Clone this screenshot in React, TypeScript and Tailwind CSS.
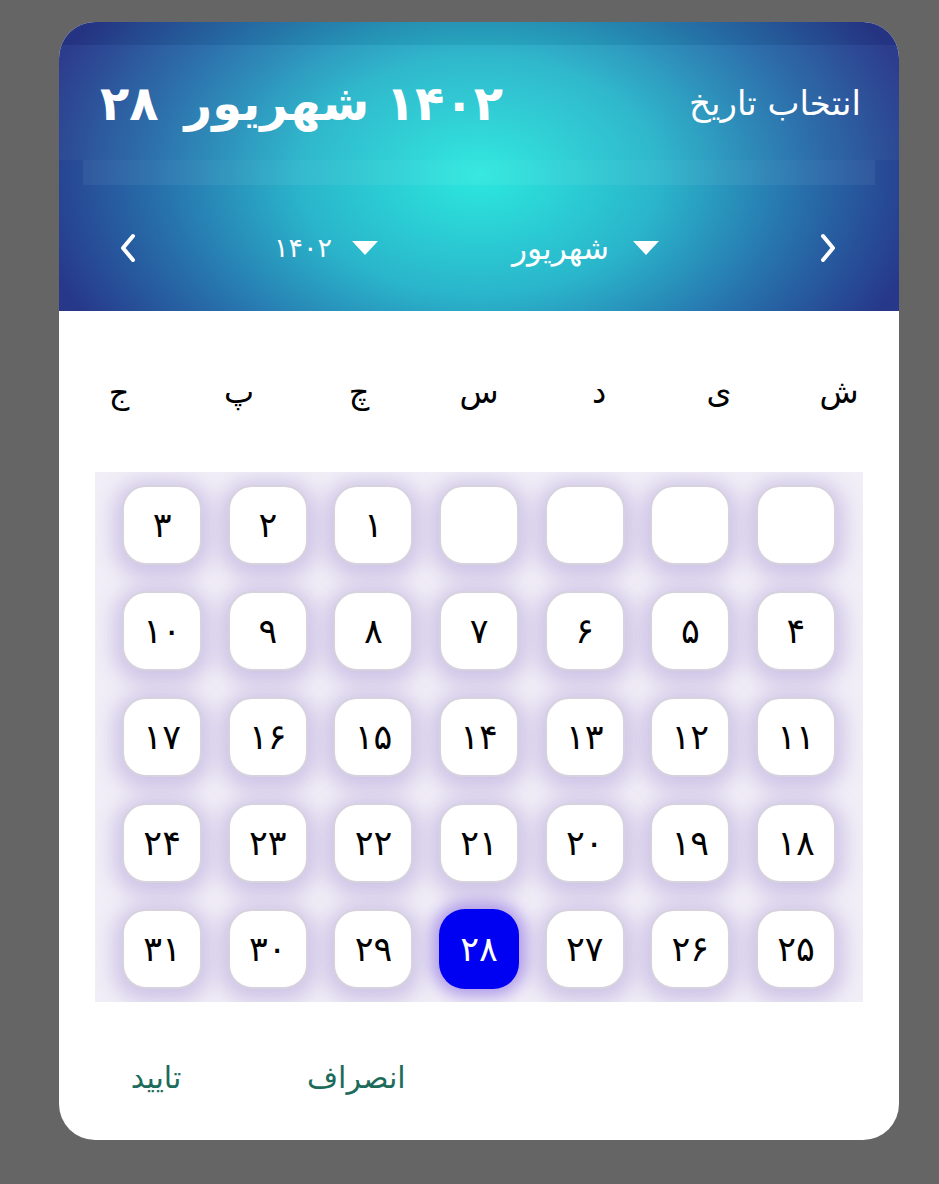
import React from "react";

const font = { fontFamily: '"DejaVu Sans", "Noto Sans", sans-serif' };

const weekdays = ["ش", "ی", "د", "س", "چ", "پ", "ج"];
const fa = (n: number) => String(n).replace(/\d/g, (d) => "۰۱۲۳۴۵۶۷۸۹"[Number(d)]);

function Chevron({ dir }: { dir: "left" | "right" }) {
  return (
    <svg width="18" height="32" viewBox="0 0 18 32" fill="none">
      <path
        d={dir === "left" ? "M14 4 L4 16 L14 28" : "M4 4 L14 16 L4 28"}
        stroke="white"
        strokeWidth="4"
        strokeLinecap="round"
        strokeLinejoin="round"
      />
    </svg>
  );
}

function Tri() {
  return (
    <svg width="26" height="14" viewBox="0 0 26 14">
      <path d="M0 0 L26 0 L13 14 Z" fill="white" />
    </svg>
  );
}

export default function App() {
  const cells: (number | null)[] = [null, null, null, null];
  for (let i = 1; i <= 31; i++) cells.push(i);

  return (
    <div className="min-h-[1184px] w-[939px] bg-[#666566] pt-[22px] pl-[59px]" style={font}>
      <div dir="rtl" className="w-[840px] h-[1118px] bg-white rounded-[36px] overflow-hidden flex flex-col">
        {/* Header */}
        <div className="h-[289px] bg-[radial-gradient(ellipse_450px_300px_at_50%_53%,#2ce8de_0%,#2ab5cb_40%,#2773ad_70%,#27378a_100%)] flex flex-col">
          <div className="h-[23px] bg-black/[0.05]" />
          <div className="h-[115px] flex items-center justify-between pr-[38px] pl-[41px] bg-white/[0.03]">
            <span className="text-white text-[34px] leading-none">انتخاب تاریخ</span>
            <span className="text-white text-[48px] font-bold leading-none flex gap-[26px]">
              <span>۱۴۰۲ شهریور</span>
              <span>۲۸</span>
            </span>
          </div>
          <div className="h-[25px] mx-[24px] bg-white/[0.05]" />
          <div dir="ltr" className="flex-1 flex items-center pl-[60px] pr-[62px]">
            <Chevron dir="left" />
            <div className="ml-[137px] flex items-center gap-[20px] text-white text-[27px]">
              <span>۱۴۰۲</span>
              <Tri />
            </div>
            <div className="ml-[134px] flex items-center gap-[24px] text-white text-[31px]">
              <span>شهریور</span>
              <Tri />
            </div>
            <div className="ml-auto">
              <Chevron dir="right" />
            </div>
          </div>
        </div>

        {/* Weekdays */}
        <div className="grid grid-cols-7 h-[161px] items-center text-black text-[32px] leading-none">
          {weekdays.map((w) => (
            <div key={w} className="text-center">
              {w}
            </div>
          ))}
        </div>

        {/* Grid */}
        <div className="mx-[36px] px-[27px] py-[13px] bg-[#f1eef7] overflow-hidden">
          <div className="grid grid-cols-7 gap-x-[25.5px] gap-y-[26px]">
            {cells.map((c, i) => {
              const sel = c === 28;
              return (
                <div
                  key={i}
                  className={
                    sel
                      ? "w-[80px] h-[80px] rounded-[26px] bg-[#0000f2] text-white flex items-center justify-center text-[35px] shadow-[0_0_16px_7px_rgba(110,70,220,0.5)]"
                      : "w-[80px] h-[80px] rounded-[24px] bg-white border-2 border-[#d6d2de] text-black flex items-center justify-center text-[35px] shadow-[0_4px_20px_8px_rgba(150,130,205,0.38)]"
                  }
                >
                  {c === null ? "" : fa(c)}
                </div>
              );
            })}
          </div>
        </div>

        {/* Footer */}
        <div dir="ltr" className="flex-1 flex items-center pl-[64px] pt-[12px] text-[#1d6b5a] text-[30px]">
          <span className="w-[66px] text-center">تایید</span>
          <span className="ml-[118px]">انصراف</span>
        </div>
      </div>
    </div>
  );
}
